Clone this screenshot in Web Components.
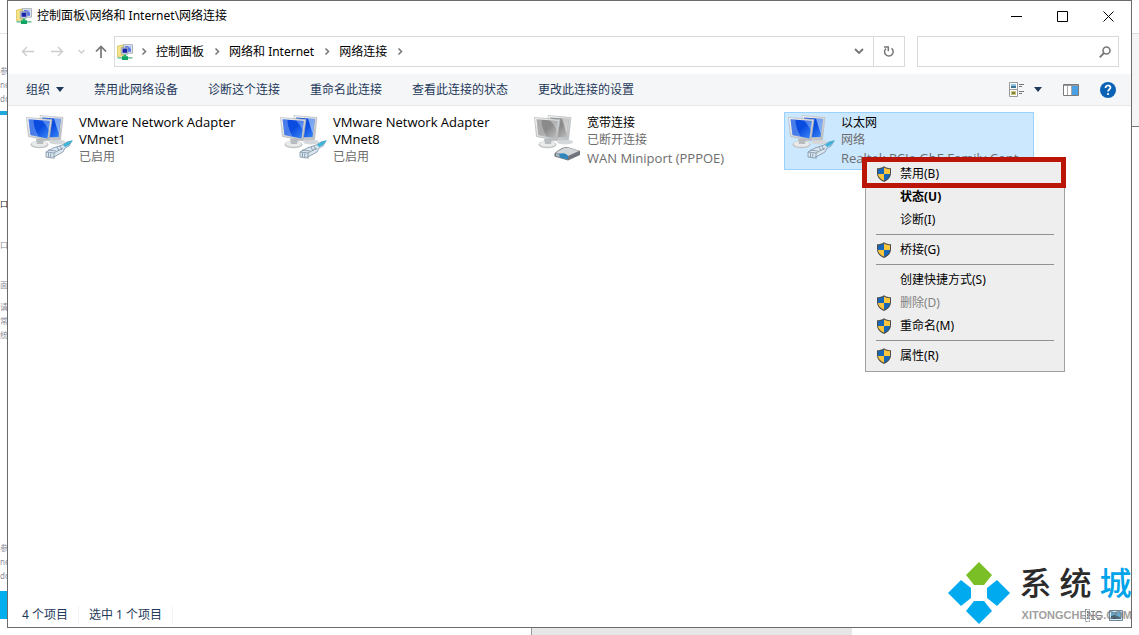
<!DOCTYPE html>
<html lang="zh-CN">
<head>
<meta charset="utf-8">
<title>网络连接</title>
<style>
html,body{height:100%;margin:0}
body{background:#fff;font:12px/18px "Noto Sans","Noto Sans CJK SC",sans-serif;color:#000;overflow:hidden}
</style>
</head>
<body>
<desk-top>
  <back-page slot="left"></back-page>
  <app-window>
    <title-bar slot="title">控制面板\网络和 Internet\网络连接</title-bar>
    <nav-bar slot="nav"></nav-bar>
    <tool-bar slot="tools"></tool-bar>
    <connection-item name="VMware Network Adapter VMnet1" lines="已启用" device="plug"></connection-item>
    <connection-item name="VMware Network Adapter VMnet8" lines="已启用" device="plug"></connection-item>
    <connection-item name="宽带连接" lines="已断开连接|WAN Miniport (PPPOE)" device="modem" off></connection-item>
    <connection-item name="以太网" lines="网络|Realtek PCIe GbE Family Controller" device="plug" selected>
      <context-menu>
        <menu-item shield marked>禁用(B)</menu-item>
        <menu-item strong>状态(U)</menu-item>
        <menu-item>诊断(I)</menu-item>
        <menu-line></menu-line>
        <menu-item shield>桥接(G)</menu-item>
        <menu-line></menu-line>
        <menu-item>创建快捷方式(S)</menu-item>
        <menu-item shield disabled>删除(D)</menu-item>
        <menu-item shield>重命名(M)</menu-item>
        <menu-line></menu-line>
        <menu-item shield>属性(R)</menu-item>
      </context-menu>
    </connection-item>
    <status-bar slot="status"></status-bar>
  </app-window>
  <side-page slot="right"></side-page>
  <site-mark slot="mark"></site-mark>
</desk-top>
<script>
const RESET = `*,:host{box-sizing:border-box}
button,input{font:inherit;color:inherit;background:none;border:0;margin:0;padding:0;text-align:left}
svg{display:block;flex:none}`;
function define(tag, css, html) {
  customElements.define(tag, class extends HTMLElement {
    connectedCallback() {
      if (this.shadowRoot) return;
      const body = typeof html === 'function' ? html(this) : html;
      this.attachShadow({mode:'open'}).innerHTML = `<style>${RESET}${css}</style>${body}`;
    }
  });
}

const NET = `<svg width="16" height="16" viewBox="0 0 16 16" aria-hidden="true">
<path d="M.3 2.300l6-1.500v11l-6 .7z" fill="#f6e58a" stroke="#c9a92e" stroke-width=".6"/>
<path d="M6.500.6h9v8.600h-9z" fill="#dfe5ea" stroke="#9aa5b0" stroke-width=".8"/>
<path d="M8 2h6v5.800H8z" fill="#5a78e8"/><path d="M10.500 2H14v3z" fill="#a9bdf8"/>
<path d="M4.300 3.400h6.400v6.800H4.300z" fill="#d6dee6" stroke="#7d8b98" stroke-width=".6"/><path d="M5.500 4.500h4.600v4.300H5.500z" fill="#1b23a8"/>
<path d="M6.800 10.500h2.400v2H6.800z" fill="#21b06c"/><path d="M.5 13h15v1.700H.5z" fill="#7fc9a5"/><path d="M5 12.200h6V16H5z" fill="#12a562"/></svg>`;

const SHIELD = `<svg width="16" height="16" viewBox="0 0 16 16" aria-hidden="true">
<path d="M8 .3C10 1.700 12.500 2.300 15 2.300V7c0 4.500-3 7.200-7 9C4 14.200 1 11.500 1 7V2.300C3.500 2.300 6 1.700 8 .3z" fill="#4a4a48"/>
<path d="M8 1.600V8H2V3.300c2.200 0 4.300-.6 6-1.700z" fill="#1767b8"/><path d="M8 1.600c1.700 1.100 3.800 1.700 6 1.700V8H8z" fill="#fcc63c"/>
<path d="M2 8h6v6.800C4.800 13.300 2.400 11.300 2 8z" fill="#fcc63c"/><path d="M8 8h6c-.4 3.300-2.800 5.300-6 6.800z" fill="#1767b8"/></svg>`;

function computers(device, off) {
  const a = off ? '#8a8a8a' : '#0a4be0', b = off ? '#c4c4c4' : '#3f8dfa', c = off ? '#fafafa' : '#d6efff', k = off ? 'g' : 'b';
  const plug = `<path d="M20 38l7-4 9-3 5-3 5-1-3 5-4 2-2 4-11 6-6-1z" fill="#dbe5ee" stroke="#7c92a8" stroke-width=".8"/>
<path d="M20 38l8 1v6M28 39l9-5M22 36l8 1M22.500 39v4M24.700 39.500v4M31 33l2 4M34 32l2 4" fill="none" stroke="#6f869c" stroke-width=".7"/>
<path d="M37 31l4-3 6-2-4 5-4 2z" fill="#3fb2d8"/>`;
  const modem = `<path d="M20.500 39.500c4-4 8-6.500 13-6.500l12.500 4v4l-12 5.500-13.500-4z" fill="#6f757b"/><path d="M22 38.500c5-3.500 8-5 12-5l11 3.500-11 5z" fill="#d3d7da"/>
<path d="M22 39l12 3v3.500L22 42z" fill="#a8b4bd"/><path d="M25 40c4-1.500 7-1 9 2v3.500l-8-2z" fill="#2f86bd"/>`;
  return `<svg width="48" height="48" viewBox="0 0 48 48" aria-hidden="true"><defs>
<linearGradient id="${k}" x1="0" y1="0" x2="1" y2="1"><stop offset="0" stop-color="${a}"/><stop offset=".5" stop-color="${a}"/><stop offset="1" stop-color="${b}"/></linearGradient>
<linearGradient id="s" x1="0" y1="0" x2="1" y2="1"><stop offset="0" stop-color="#fafafa"/><stop offset="1" stop-color="#b4b7ba"/></linearGradient></defs>
<ellipse cx="31" cy="28" rx="8" ry="2.500" fill="#d5d8da"/>
<path d="M14 1.500l23 2-2.500 22-17 1z" fill="url(#s)" stroke="#b9bdc0" stroke-width=".7"/><path d="M16 3.500l18.800 1.600L32.500 23 20 23.500z" fill="url(#${k})"/><path d="M28 4.500l6.700.6-2 14.500z" fill="${c}" opacity=".55"/>
<ellipse cx="13.500" cy="30.500" rx="9" ry="3.800" fill="#c0c3c5"/><ellipse cx="13.500" cy="29.800" rx="8" ry="3" fill="#e9eaea"/><path d="M10 25h8l-1 5h-6z" fill="#b8bcbf"/>
<path d="M.5 3.500l25.500 2-3 21L2.500 22.500z" fill="url(#s)" stroke="#b0b4b7" stroke-width=".7"/><path d="M2.500 5.300l21.300 1.700-2.400 17.500L4.500 21z" fill="url(#${k})"/>
<path d="M2.500 5.300l5 .4c0 6 2 10 5 17L4.500 21z" fill="${c}" opacity=".3"/><path d="M16 6.400l7.800.6-1.200 9c-2-4-4-7-6.600-9.600z" fill="${c}" opacity=".35"/>
${device === 'modem' ? modem : plug}</svg>`;
}

define('desk-top', `:host{display:grid;grid-template-columns:7px 1fr 7px;grid-template-rows:1fr 7px;height:100vh;position:relative;overflow:hidden}
.under{grid-column:1/4;display:grid;grid-template-columns:531fr 321fr 287fr}
.under i{grid-column:2;background:#e6e6e6;border-left:1px solid #999}
::slotted(app-window){min-width:0}
::slotted(site-mark){position:absolute;right:7px;bottom:11px}`,
`<slot name="left"></slot><slot></slot><slot name="right"></slot><div class="under"><i></i></div><slot name="mark"></slot>`);

define('back-page', `:host{display:flex;flex-direction:column;overflow:hidden;min-width:0;color:#8d909c;font-size:8px;line-height:14px;white-space:nowrap}
div{flex:none}.top{height:34px;border-bottom:1px solid #e4e4e4}.a{padding-top:30px;height:77px}.bar{height:4px;background:#1ea7dd}
.b{height:82px}.dark{color:#222}.blue{height:28px;background:#00aeef}
.g1{height:27px}.g2{height:26px}.g3{height:8px}.g4{height:199px}`,
`<div class="top"></div><div class="a">参<br>ne<br>do</div><div class="bar"></div><div class="b"></div><div class="dark">口</div><div class="g1"></div><div>口</div><div class="g2"></div><div>面</div><div class="g3"></div><div>请<br>常<br>统</div><div class="g4"></div><div>参<br>ne<br>do</div><div class="g3"></div><div class="blue"></div>`);

define('side-page', `:host{display:block}.h{height:34px;border-bottom:1px solid #ddd}.p{height:93px;background:#f5f5f5;border-bottom:1px solid #777}`, `<div class="h"></div><div class="p"></div>`);

define('app-window', `:host{display:flex;flex-direction:column;border:1px solid #6b6b6b;background:#fff}
main{flex:1;display:grid;grid-template-columns:repeat(auto-fill,250px);gap:4px;align-content:start;padding:6px 14px}`,
`<slot name="title"></slot><slot name="nav"></slot><slot name="tools"></slot><main><slot></slot></main><slot name="status"></slot>`);

define('title-bar', `:host{display:flex;align-items:center;height:30px;padding-left:8px}
h1{flex:1;margin:0 0 0 5px;font:inherit}button{width:46px;height:30px;display:grid;place-items:center}
button path{fill:none;stroke:#000}`,
`${NET}<h1><slot></slot></h1>
<button aria-label="最小化"><svg width="11" height="11"><path d="M0 5.500h11"/></svg></button>
<button aria-label="最大化"><svg width="11" height="11"><path d="M.5.5h10v10H.5z"/></svg></button>
<button aria-label="关闭"><svg width="11" height="11"><path d="M.5.5l10 10M10.500.5l-10 10"/></svg></button>`);

const CHEV = `<svg class="chev" width="25" height="9" viewBox="0 0 25 9" aria-hidden="true"><path d="M11.500 1.500l3 3-3 3" fill="none" stroke="#777" stroke-width="1.500"/></svg>`;
define('nav-bar', `:host{display:flex;align-items:center;padding:5px 12px 7px 4px}
.arrows{display:flex;align-items:center;width:102px}.arrows button{height:30px;display:grid;place-items:center}
.w{width:30px}.s{width:18px}.u{width:22px}
button path,circle,.search path{fill:none}
.addr{flex:1;display:flex;align-items:center;height:31px;border:1px solid #d9d9d9;padding-left:2px}
nav{flex:1;display:flex;align-items:center;margin-left:-2px}a{color:#000;text-decoration:none}
.drop{width:28px;height:29px;display:grid;place-items:center}
.ref{width:31px;height:29px;border-left:1px solid #d9d9d9;display:grid;place-items:center}
.search{display:flex;align-items:center;width:202px;height:31px;border:1px solid #d9d9d9;margin-left:12px;padding-right:7px}
input{flex:1;min-width:0;outline:0;padding-left:6px}`,
`<div class="arrows">
<button class="w" aria-label="后退"><svg width="13" height="11"><path d="M13 5.500H1.500M6 1L1.500 5.500 6 10" stroke="#ccc" stroke-width="1.400"/></svg></button>
<button class="w" aria-label="前进"><svg width="13" height="11"><path d="M0 5.500h11.500M7 1l4.500 4.500L7 10" stroke="#ccc" stroke-width="1.400"/></svg></button>
<button class="s" aria-label="最近位置"><svg width="7" height="5"><path d="M.5 1l3 3 3-3" stroke="#ccc" stroke-width="1.300"/></svg></button>
<button class="u" aria-label="上移"><svg width="12" height="13"><path d="M6 13V1.500M1 6.500l5-5 5 5" stroke="#777" stroke-width="1.700"/></svg></button></div>
<div class="addr">${NET}<nav aria-label="地址">${CHEV}<a href="#">控制面板</a>${CHEV}<a href="#">网络和 Internet</a>${CHEV}<a href="#">网络连接</a>${CHEV}</nav>
<button class="drop" aria-label="展开"><svg width="10" height="7"><path d="M1 1l4 4 4-4" stroke="#777" stroke-width="1.900"/></svg></button>
<button class="ref" aria-label="刷新"><svg width="12" height="13" viewBox="0 0 12 13"><path d="M8.500 3.300A4.300 4.300 0 1 1 3 3.500M1 2h4.300v4.200" stroke="#777" stroke-width="1.500"/></svg></button></div>
<div class="search"><input type="search" aria-label="搜索"><svg width="12" height="12"><circle cx="7.500" cy="4.500" r="3.500" stroke="#777" stroke-width="1.600"/><path d="M5 7L.7 11.300" stroke="#777" stroke-width="1.800"/></svg></div>`);

define('tool-bar', `:host{display:flex;align-items:center;height:32px;padding:0 15px 0 3px;background:#f5f6f7;border-bottom:1px solid #e6e8eb;color:#1e395b}
button{height:30px;padding:0 15px;display:flex;align-items:center;gap:6px}
.space{flex:1}.icons{display:flex;gap:21px}.icons button{padding:0;gap:9px}`,
`<button>组织<svg width="8" height="5"><path d="M0 0h8L4 5z" fill="#1e395b"/></svg></button><button>禁用此网络设备</button><button>诊断这个连接</button><button>重命名此连接</button><button>查看此连接的状态</button><button>更改此连接的设置</button><span class="space"></span>
<div class="icons"><button aria-label="更改视图"><svg width="16" height="15"><path d="M.5.5h8v14h-8zM.5 7.500h8" fill="#fff" stroke="#999"/><path d="M2 2h5v4H2z" fill="#8fc3e0"/><path d="M2 4h5v2H2z" fill="#3a7393"/><path d="M2 9h5v4H2z" fill="#c9c27a"/><path d="M3 10h3v2H3z" fill="#7d8440"/><path d="M10 2.500h5M10 4.500h3M10 9.500h5M10 11.500h3" stroke="#777"/></svg><svg width="8" height="5"><path d="M0 0h8L4 5z" fill="#1e395b"/></svg></button>
<button aria-label="预览窗格"><svg width="16" height="12"><path d="M.5.5h15v11H.5z" fill="#fff" stroke="#7a7a7a"/><path d="M1 1.500h14" stroke="#999"/><path d="M4.500 2v9M8.500 2v9" stroke="#aaa"/><path d="M9 2h6v9H9z" fill="#4ba0e4"/></svg></button>
<button aria-label="帮助"><svg width="16" height="16"><circle cx="8" cy="8" r="8" fill="#0a62b5"/><path d="M5.500 6c0-3.300 5-3.300 5-.4 0 1.800-2.400 1.900-2.400 4" fill="none" stroke="#fff" stroke-width="1.700"/><circle cx="8" cy="12" r="1.100" fill="#fff"/></svg></button></div>`);

define('connection-item', `:host{display:flex;gap:5px;position:relative;height:58px;padding:1px 3px;border:1px solid transparent}
:host([selected]){background:#cce8ff;border-color:#99d1ff}
.t{flex:1;min-width:0}p{margin:0;line-height:18px;color:#6d6d6d;white-space:nowrap;overflow:hidden;text-overflow:ellipsis}
h2{margin:0;font:inherit;line-height:17px}.latin{font-family:"Open Sans",sans-serif;font-size:13px}h2.latin{width:160px}
::slotted(context-menu){position:absolute;left:80px;top:45px;z-index:2}`,
el => {
  const cls = s => /^[\x20-\x7e]+$/.test(s) ? 'latin' : 'han';
  const n = el.getAttribute('name');
  return computers(el.getAttribute('device'), el.hasAttribute('off')) +
    `<div class="t"><h2 class="${cls(n)}">${n}</h2>${el.getAttribute('lines').split('|').map(s => `<p class="${cls(s)}">${s}</p>`).join('')}</div><slot></slot>`;
});

define('context-menu', `:host{display:block;width:200px;padding:3px 0 4px;background:#eee;border:1px solid #a0a0a0}`, `<div role="menu"><slot></slot></div>`);
define('menu-line', `:host{display:block;padding:3px 10px}hr{margin:0;border:0;height:1px;background:#919191}`, `<hr>`);
define('menu-item', `:host{display:block;position:relative}
button{display:grid;grid-template-columns:16px 1fr;gap:8px;align-items:center;width:100%;height:23px;padding-left:10px}
:host([strong]) button{font-weight:700}button:disabled{color:#838383}span{grid-column:2}
:host([marked])::after{content:"";box-sizing:border-box;position:absolute;left:-4px;right:-2px;top:-5px;height:31px;border:5px solid #bb1508}`,
el => `<button role="menuitem"${el.hasAttribute('disabled') ? ' disabled' : ''}>${el.hasAttribute('shield') ? SHIELD : ''}<span><slot></slot></span></button>`);

define('status-bar', `:host{display:flex;align-items:center;height:24px;padding:0 8px 0 14px;color:#1e395b}
span{padding-right:10px;margin-right:10px;border-right:1px solid #f2f4f7}.space{flex:1}.v{display:flex;gap:8px}`,
`<span>4 个项目</span><span>选中 1 个项目</span><div class="space"></div><div class="v">
<button aria-label="详细信息"><svg width="16" height="13"><path d="M.5.5h4v12h-4zM2.500 2v9" fill="none" stroke="#888" stroke-dasharray="2 1"/><path d="M6 2.500h10M6 6.500h10M6 10.500h10" stroke="#888" stroke-dasharray="4 2"/></svg></button>
<button aria-label="大图标"><svg width="14" height="11"><path d="M.5.5h13v10H.5z" fill="#d4edfb" stroke="#6d8496"/><path d="M2 2h10v7H2z" fill="#69a9cf"/><path d="M2 6l4-1 6 3v1H2z" fill="#3a5a6a"/></svg></button></div>`);

define('site-mark', `:host{display:flex;gap:10px;pointer-events:none}
.n{display:flex;gap:8px;font:500 32px/38px "Noto Sans CJK SC",sans-serif;color:#2b2b2b}.n b{font-weight:500;color:#00a4ea}
.d{font:700 11px/14px "Liberation Sans",sans-serif;color:#777;opacity:.7;padding-left:2px;margin-top:8px}`,
`<svg width="62" height="62" viewBox="0 0 62 62" aria-hidden="true"><path d="M31 0l13 13-8 10H26L18 13z" fill="#7bbf26"/><path d="M13 18l10 8v10l-10 8L0 31z" fill="#00aaef"/><path d="M49 18l13 13-13 13-10-8V26z" fill="#00aaef"/><path d="M26 39h10l8 10-13 13-13-13z" fill="#00aaef"/></svg>
<div><div class="n"><span>系</span><span>统</span><b>城</b></div><div class="d">XITONGCHENG.COM</div></div>`);
</script>
</body>
</html>
